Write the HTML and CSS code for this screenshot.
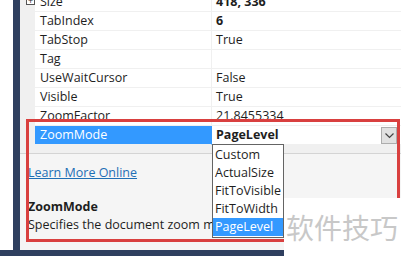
FILE: index.html
```html
<!DOCTYPE html>
<html lang="en">

<head>
    <meta charset="UTF-8">
    <title>Properties - ZoomMode</title>
    <link rel="stylesheet" href="styles.css">
</head>

<body>
    <div class="window">
        <div class="outside"></div>
        <div class="edge"></div>

        <div class="panel">
            <div class="grid">
                <div class="row">
                    <div class="gutter"><span class="expand">+</span></div>
                    <div class="name">Size</div>
                    <div class="value bold">418, 336</div>
                </div>
                <div class="row">
                    <div class="gutter"></div>
                    <div class="name">TabIndex</div>
                    <div class="value bold">6</div>
                </div>
                <div class="row">
                    <div class="gutter"></div>
                    <div class="name">TabStop</div>
                    <div class="value">True</div>
                </div>
                <div class="row">
                    <div class="gutter"></div>
                    <div class="name">Tag</div>
                    <div class="value"></div>
                </div>
                <div class="row">
                    <div class="gutter"></div>
                    <div class="name">UseWaitCursor</div>
                    <div class="value">False</div>
                </div>
                <div class="row">
                    <div class="gutter"></div>
                    <div class="name">Visible</div>
                    <div class="value">True</div>
                </div>
                <div class="row">
                    <div class="gutter"></div>
                    <div class="name">ZoomFactor</div>
                    <div class="value">21.8455334</div>
                </div>
                <div class="row selected">
                    <div class="gutter"></div>
                    <div class="name">ZoomMode</div>
                    <div class="value bold">
                        <span>PageLevel</span>
                        <span class="drop-btn">
                            <svg width="9" height="6" viewBox="0 0 9 6">
                                <path d="M0.5 0.5 L4.5 4.5 L8.5 0.5" fill="none" stroke="#444" stroke-width="1.2"/>
                            </svg>
                        </span>
                    </div>
                </div>
            </div>

            <div class="commands">
                <a href="#">Learn More Online</a>
            </div>

            <div class="desc">
                <div class="desc-title">ZoomMode</div>
                <div class="desc-text">Specifies the document zoom mode.</div>
            </div>
        </div>

        <div class="bottom-bar"></div>

        <!-- open dropdown of the ZoomMode value -->
        <ul class="drop-list">
            <li>Custom</li>
            <li>ActualSize</li>
            <li>FitToVisible</li>
            <li>FitToWidth</li>
            <li class="active">PageLevel</li>
        </ul>

        <div class="red-box"></div>
        <div class="watermark">软件技巧</div>
    </div>
</body>

</html>
```

FILE: styles.css
```css
body {
    margin: 0;
    font-family: 'Open Sans', sans-serif;
    font-size: 12.5px;
    color: #1e1e1e;
    background: #fff;
}

.window {
    position: relative;
    width: 401px;
    height: 256px;
    display: flex;
    overflow: hidden;
}

.outside {
    width: 13px;
    background: #fff;
}

.edge {
    width: 7px;
    background: #2f3f5f;
}

.panel {
    flex: 1;
    display: flex;
    flex-direction: column;
    background: #f5f5f5;
}

.grid {
    margin-top: -7px;
    height: 160px;
    background: #f0f0f0;
    border-bottom: 1px solid #d4d4d4;
}

.row {
    display: grid;
    grid-template-columns: 15px 177px 1fr;
    height: 19px;
}

.gutter {
    background: #f0f0f0;
    position: relative;
}

.expand {
    position: absolute;
    left: 6px;
    top: 3px;
    width: 7px;
    height: 7px;
    border: 1px solid #555;
    font-size: 9px;
    line-height: 7px;
    text-align: center;
    background: #fff;
}

.name,
.value {
    background: #fff;
    border-bottom: 1px solid #f0f0f0;
    line-height: 18px;
    white-space: nowrap;
    overflow: hidden;
}

.name {
    padding-left: 5px;
    border-right: 1px solid #f0f0f0;
}

.value {
    padding-left: 4px;
    display: flex;
    justify-content: space-between;
}

.bold {
    font-weight: bold;
}

.selected .name {
    background: #3399ff;
    color: #fff;
    border-right-color: #3399ff;
}

.drop-btn {
    width: 14px;
    height: 15px;
    margin: 1px 4px 0 0;
    background: #e1e1e1;
    border: 1px solid #adadad;
    display: flex;
    align-items: center;
    justify-content: center;
}

.commands {
    height: 40px;
    padding: 10px 0 0 8px;
    box-sizing: border-box;
}

.commands a {
    color: #1f6fb5;
}

.desc {
    padding: 4px 0 0 8px;
}

.desc-title {
    font-weight: bold;
    line-height: 18px;
}

.desc-text {
    line-height: 17px;
    white-space: nowrap;
}

.bottom-bar {
    position: absolute;
    left: 0;
    right: 0;
    bottom: 0;
    height: 6px;
    background: #2f3f5f;
}

.drop-list {
    position: absolute;
    left: 212px;
    top: 144px;
    width: 70px;
    margin: 0;
    padding: 1px 0;
    list-style: none;
    background: #fff;
    border: 1px solid #646464;
}

.drop-list li {
    height: 18px;
    line-height: 18px;
    padding-left: 2px;
    white-space: nowrap;
}

.drop-list .active {
    background: #3399ff;
    color: #fff;
}

.red-box {
    position: absolute;
    left: 26px;
    top: 119px;
    width: 368px;
    height: 117px;
    border: 3px solid #d9403f;
}

.watermark {
    position: absolute;
    left: 284px;
    top: 198px;
    width: 117px;
    height: 58px;
    background: #fff;
    color: #c8c8c8;
    font-family: 'Noto Sans CJK SC', sans-serif;
    font-size: 28px;
    line-height: 58px;
    padding-left: 2px;
    box-sizing: border-box;
}
```
